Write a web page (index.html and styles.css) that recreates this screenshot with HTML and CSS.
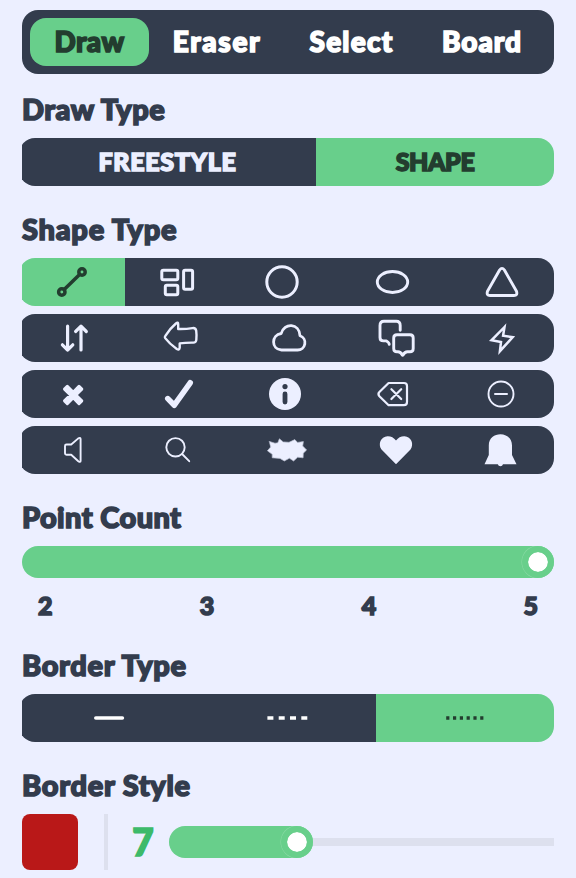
FILE: index.html
```html
<!DOCTYPE html>
<html lang="en">
<head>
<meta charset="utf-8">
<title>Drawing tools</title>
<link rel="stylesheet" href="styles.css">
</head>
<body>
<main class="panel">
  <nav class="tabs">
    <button class="tab active"><span class="w-draw">Draw</span></button>
    <button class="tab"><span class="w-eraser">Eraser</span></button>
    <button class="tab"><span class="w-select">Select</span></button>
    <button class="tab"><span class="w-board">Board</span></button>
  </nav>

  <section>
    <h2 class="h-draw">Draw Type</h2>
    <div class="clip"><div class="bar modes">
      <button class="cell"><span class="w-free">FREESTYLE</span></button>
      <button class="cell active"><span class="w-shape">SHAPE</span></button>
    </div></div>
  </section>

  <section>
    <h2 class="h-shape">Shape Type</h2>
    <div class="rows">
      <div class="clip"><div class="bar shapes-1">
        <button class="cell active"><svg viewBox="0 0 40 40"><g stroke-width="3.5"><circle cx="9.8" cy="30" r="3.2"/><circle cx="30" cy="10" r="3.2"/><path d="M12.2 27.6 27.6 12.4"/></g></svg></button>
        <button class="cell"><svg viewBox="0 0 40 40"><g stroke-width="3"><rect x="4.8" y="8.2" width="16" height="9.5" rx="1.5"/><rect x="8.3" y="23.3" width="12.5" height="9.4" rx="1.5"/><rect x="26.6" y="8.2" width="9" height="19" rx="1.5"/></g></svg></button>
        <button class="cell"><svg viewBox="0 0 40 40"><circle cx="20" cy="20" r="15.2" stroke-width="3"/></svg></button>
        <button class="cell"><svg viewBox="0 0 40 40"><ellipse cx="19.5" cy="20" rx="15.2" ry="10.5" stroke-width="2.9"/></svg></button>
        <button class="cell"><svg viewBox="0 0 40 40"><path stroke-width="2.9" d="M17.6 8 5.5 29.3Q4.2 33.5 8 33.5H32Q35.8 33.5 34.5 29.3L22.4 8Q20 4.7 17.6 8Z"/></svg></button>
      </div></div>
      <div class="clip"><div class="bar shapes-2">
        <button class="cell"><svg viewBox="0 0 40 40"><path stroke-width="3.2" d="M13.6 8.2V32M8.4 26.8 13.6 32 18.8 26.8M27 32V8.2M21.6 13.5 27 8.2 32.3 13.5"/></svg></button>
        <button class="cell"><svg viewBox="0 0 40 40"><path stroke-width="2.4" d="M4.2 18.2Q8.8 10.6 14.9 5.5Q17.3 3.3 17.2 6.5V11Q24.8 11.2 31.5 10.1Q34.7 9.7 35.2 12.7Q35.8 17 35.3 22Q35 24.6 32.3 24.6Q24.5 24.5 18.7 25.4V29.6Q18.4 32.5 15.8 30.9Q8.4 25.7 4.2 20.1Q3.5 19 4.2 18.2Z"/></svg></button>
        <button class="cell"><svg viewBox="0 0 40 40"><path stroke-width="2.8" d="M12.5 32H28.5A7.3 7.3 0 0 0 31 17.8C30.4 4.8 15 4.3 12.2 15.5C2 16.8 2 31.4 12.5 32Z"/></svg></button>
        <button class="cell"><svg viewBox="0 0 40 40"><path stroke-width="2.9" d="M12.2 26.2Q12.4 25 9.3 22.9H6.5Q3 22.9 3 19.5V7.5Q3 3.3 7 3.3H19.3Q23.2 3.3 23.2 7.5V12.2M20 16.7H33Q36.2 16.7 36.2 19.9V30.5Q36.2 33.8 33 33.8H30.4Q27.7 33.8 26 37.2H25.5Q23.6 33.8 21 33.8H20Q16.7 33.8 16.7 30.5V19.9Q16.7 16.7 20 16.7Z"/></svg></button>
        <button class="cell"><svg viewBox="0 0 40 40"><path class="sharp" stroke-width="2.5" d="M22.5 9 9.5 22.3 19 24 17.9 33.2 30.7 19.2 21.1 17.7Z"/></svg></button>
      </div></div>
      <div class="clip"><div class="bar shapes-3">
        <button class="cell"><svg viewBox="0 0 40 40"><path class="solid" stroke-width="3" d="M14.3 11.7 20.2 17.6 26 11.7 29.4 15.1 23.6 21 29.4 26.9 26 30.3 20.2 24.4 14.3 30.3 10.9 26.9 16.8 21 10.9 15.1Z"/><path stroke-width="3" d="M14.3 12.3 20.2 18.2 26 12.3 28.8 15.1 22.9 21 28.8 26.9 26 29.7 20.2 23.8 14.3 29.7 11.5 26.9 17.4 21 11.5 15.1Z"/></svg></button>
        <button class="cell"><svg viewBox="0 0 40 40"><path stroke-width="5.6" d="m8.8 24.6 6.5 6.6L31.2 8.8"/></svg></button>
        <button class="cell"><svg viewBox="0 0 40 40"><circle class="solid" cx="20" cy="20" r="16"/><circle class="hole" cx="20" cy="12.6" r="2.6"/><path class="cut" d="M20 20v8"/></svg></button>
        <button class="cell"><svg viewBox="0 0 40 40"><path stroke-width="2.2" d="M14.6 9H30Q33 9 33 12V28Q33 31.2 30 31.2H14.6L5.4 22.2Q3.5 20 5.4 18ZM17.4 15.2l9.8 9.8M27.2 15.2l-9.8 9.8"/></svg></button>
        <button class="cell"><svg viewBox="0 0 40 40"><circle cx="20" cy="20" r="12.5" stroke-width="1.9"/><path stroke-width="2" d="M14 20h12"/></svg></button>
      </div></div>
      <div class="clip"><div class="bar shapes-4">
        <button class="cell"><svg viewBox="0 0 40 40"><path stroke-width="1.9" d="M12.5 14.5H17.2L24.3 8.4Q26.6 7.1 26.6 9V31Q26.6 32.7 24.3 31.2L17.2 24.8H12.5Q11 24.8 11 23.3V16Q11 14.5 12.5 14.5Z"/></svg></button>
        <button class="cell"><svg viewBox="0 0 40 40"><circle cx="17.5" cy="17.3" r="9.2" stroke-width="1.9"/><path stroke-width="1.9" d="m24.1 24 7.1 7.2"/></svg></button>
        <button class="cell"><svg viewBox="0 0 40 40"><path class="burst" d="M2.5 11.5 8 13.2 10.8 12.8 12.4 8.8 16.2 11.9 22 12.3 27.8 9.6 30.6 12.4 36.4 11.6 35.7 16 39.6 20 36.3 23.2 36.1 27.8 30.6 27.2 26.6 31 22.4 28.2 17.3 31 13 28.4 5.2 27.8 5.2 24.3.4 20.8 3.5 17.2Z"/></svg></button>
        <button class="cell"><svg viewBox="0 0 40 40"><path class="solid" d="M20 34.2 5.5 19.5C1.7 14 4.7 6.5 11.5 6.2Q16.6 6 20 10.6Q23.4 6 28.5 6.2C35.3 6.5 38.3 14 34.5 19.5Z"/></svg></button>
        <button class="cell"><svg viewBox="0 0 40 40"><path class="solid" d="M4.5 34.2 8.8 25V15.5C8.8 .6 32 .6 32 15.5V25L36.5 34.2H23Q22.4 36.2 20.4 36.2T17.8 34.2Z"/></svg></button>
      </div></div>
    </div>
  </section>

  <section>
    <h2 class="h-point">Point Count</h2>
    <div class="slider full"><div class="fill"><i class="thumb"></i></div></div>
    <div class="ticks"><span>2</span><span>3</span><span>4</span><span>5</span></div>
  </section>

  <section>
    <h2 class="h-btype">Border Type</h2>
    <div class="clip"><div class="bar borders">
      <button class="cell"><svg class="line" viewBox="0 0 44 8"><path stroke-width="3.6" d="M8.8 4h26.6"/></svg></button>
      <button class="cell"><svg class="line" viewBox="0 0 44 8"><path class="dash" d="M1.4 4h40.6"/></svg></button>
      <button class="cell active"><svg class="line" viewBox="0 0 44 8"><path class="dot" d="M3.2 4h38"/></svg></button>
    </div></div>
  </section>

  <section>
    <h2 class="h-bstyle">Border Style</h2>
    <div class="style-row">
      <div class="swatch"></div>
      <div class="divider"></div>
      <span class="size">7</span>
      <div class="slider partial"><div class="fill"><i class="thumb"></i></div></div>
    </div>
  </section>
</main>
</body>
</html>
```
FILE: styles.css
```css
* { box-sizing: border-box; }
:root {
  --bg: #ecefff;
  --dark: #333c4d;
  --green: #68cf8b;
  --ink: #233d2f;
}
body {
  margin: 0;
  height: 878px;
  overflow: hidden;
  background: var(--bg);
  color: var(--dark);
  font-family: Lato, sans-serif;
  font-weight: 900;
  stroke-linejoin: round;
  -webkit-text-stroke: 1.6px currentColor;
}
button {
  border: 0;
  padding: 0;
  background: none;
  color: var(--bg);
  font: inherit;
  -webkit-text-stroke: inherit;
}
.panel { padding: 10px 22px 0; }
.tabs {
  display: grid;
  grid-template-columns: 119px 136px 133px 128px;
  height: 64px;
  padding: 8px;
  border-radius: 16px;
  background: var(--dark);
  font-size: 28px;
}
.tab { padding-bottom: 2px; border-radius: 16px; color: #fff; white-space: nowrap; }
.tab.active { background: var(--green); color: var(--ink); }
.w-draw { letter-spacing: .4px; }
.w-eraser { letter-spacing: 1.7px; }
.w-select { letter-spacing: 1.2px; }
.w-board { letter-spacing: 1px; }
.w-free { letter-spacing: .7px; }
.w-shape { letter-spacing: -.4px; }
.h-draw { letter-spacing: .5px; }
.h-shape { letter-spacing: .75px; }
.h-point { letter-spacing: .4px; }
.h-btype { letter-spacing: .65px; }
.h-bstyle { letter-spacing: .7px; }
h2 {
  margin: 0;
  height: 64px;
  padding-top: 19px;
  font-size: 29px;
  font-weight: 900;
  line-height: 32px;
  white-space: nowrap;
}
section + section h2 { height: 72px; padding-top: 27px; }
.clip { overflow: hidden; }
.bar {
  display: grid;
  height: 48px;
  margin-left: -3px;
  border-radius: 16px;
  overflow: hidden;
}
.rows { display: grid; gap: 8px; }
.cell {
  display: flex;
  align-items: center;
  justify-content: center;
  background: var(--dark);
  font-size: 25px;
}
.cell.active { background: var(--green); color: var(--ink); }
.modes { grid-template-columns: 297px 238px; }
.modes .cell { padding-bottom: 3px; }
.shapes-1 { grid-template-columns: 106px 104px 106px 115px 104px; }
.shapes-2 { grid-template-columns: 109px 106px 110px 106px 104px; }
.shapes-3 { grid-template-columns: 108px 104px 108px 109px 106px; }
.shapes-4 { grid-template-columns: 109px 100px 118px 100px 108px; }
.borders { grid-template-columns: 180px 177px 178px; }
svg {
  width: 40px;
  height: 40px;
  fill: none;
  stroke: currentColor;
  stroke-linecap: round;
  stroke-linejoin: round;
}
.solid { fill: currentColor; stroke: none; }
.sharp { stroke-linejoin: miter; }
.hole { fill: var(--dark); stroke: none; }
.cut { stroke: var(--dark); stroke-width: 4.8; }
.burst { fill: currentColor; stroke: #b9bfd0; stroke-width: .7; }
.line { width: 44px; height: 8px; color: #fff; }
.active .line { color: var(--ink); }
.dash, .dot { stroke-linecap: butt; stroke-width: 3.6; }
.dash { stroke-dasharray: 6 5.3; }
.dot { stroke-dasharray: 3.2 3.6; }
.slider { display: flex; align-items: center; height: 32px; }
.fill {
  display: flex;
  justify-content: flex-end;
  height: 32px;
  width: 100%;
  border-radius: 16px;
  overflow: hidden;
  background: var(--green);
}
.thumb {
  width: 32px;
  height: 32px;
  border: 6px solid var(--green);
  border-radius: 50%;
  background: #fff;
  background-clip: padding-box;
  box-shadow: 0 0 0 .5px #8bdba6;
}
.ticks {
  display: flex;
  justify-content: space-between;
  height: 44px;
  padding: 11px 16px 0;
  font-size: 25px;
  line-height: 32px;
}
.style-row { display: flex; align-items: center; }
.swatch { width: 56px; height: 56px; border-radius: 8px; background: #b91818; }
.divider { width: 4px; height: 56px; margin-left: 26px; background: #dde0ee; }
.size {
  width: 61px;
  padding-left: 9px;
  text-align: center;
  color: #3dba6a;
  font-size: 37px;
  line-height: 56px;
}
.partial {
  flex: 1;
  background: linear-gradient(#dde0ee, #dde0ee) center / 100% 8px no-repeat;
}
.partial .fill { width: 144px; }
```
